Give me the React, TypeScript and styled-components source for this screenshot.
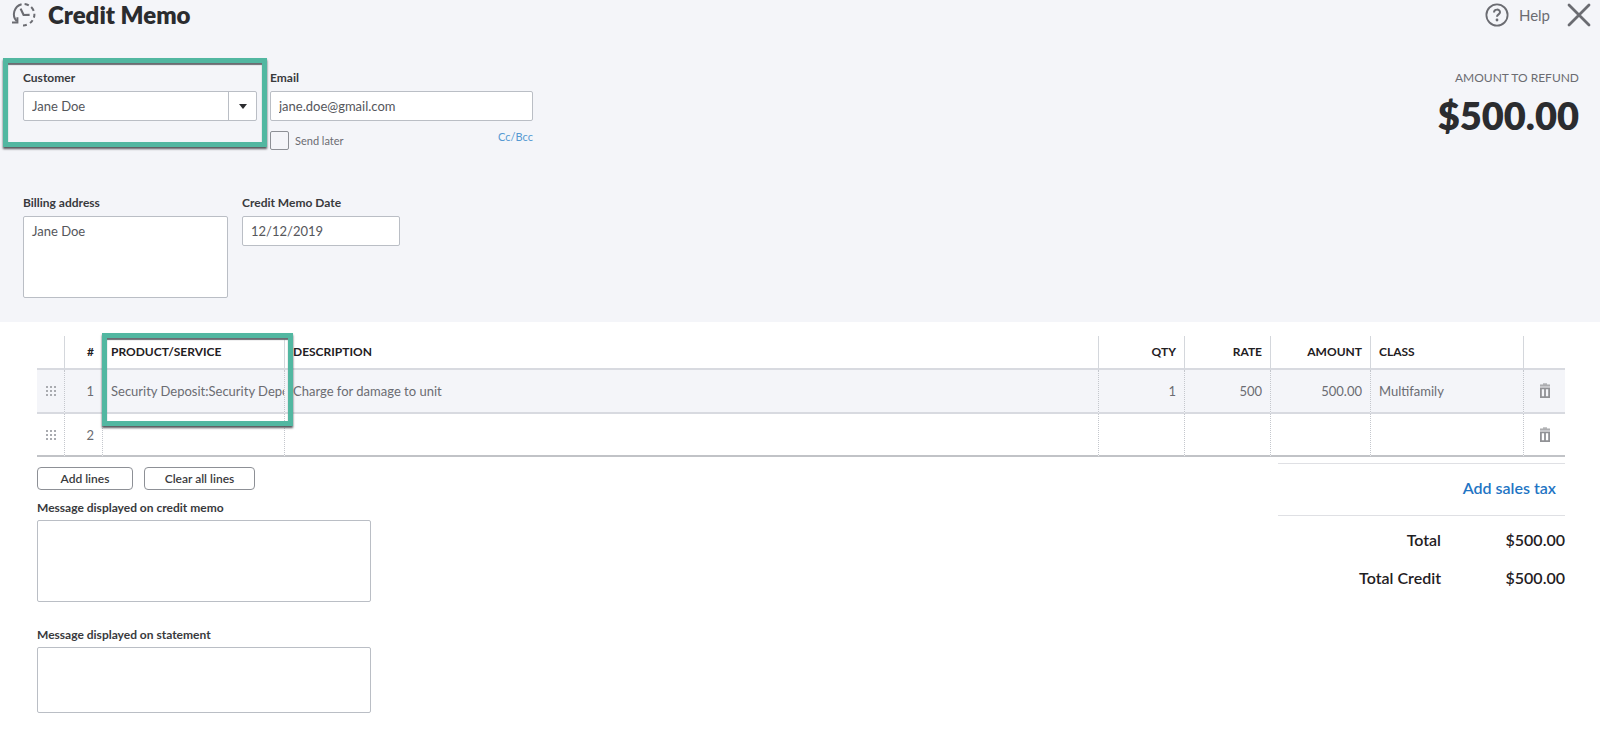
import React from "react";
import styled, { createGlobalStyle, css } from "styled-components";

const GlobalStyle = createGlobalStyle`
  *, *::before, *::after { box-sizing: border-box; }
  body {
    margin: 0;
    background: #ffffff;
    color: #393a3d;
    font-family: Lato, "Liberation Sans", sans-serif;
    font-size: 13px;
    line-height: 16px;
  }
  button, input, select, textarea { font: inherit; color: inherit; }
`;

const Header = styled.header`
  background: #f4f5f9;
  padding-bottom: 24px;
`;

const TopBar = styled.div`
  display: flex;
  align-items: center;
  justify-content: space-between;
  height: 29px;
  padding: 0 9px 0 11px;
`;

const TitleGroup = styled.div`
  display: flex;
  align-items: center;
  gap: 12px;
`;

const Title = styled.h1`
  margin: 0;
  font-size: 24px;
  line-height: 28px;
  font-weight: 800;
  color: #2b2c2f;
`;

const IconButton = styled.button`
  display: flex;
  align-items: center;
  gap: 10px;
  padding: 0;
  border: 0;
  background: none;
  color: #6b6c72;
  font-size: 15px;
  cursor: pointer;
`;

const TopActions = styled.div`
  display: flex;
  align-items: center;
  gap: 17px;
`;

const Summary = styled.div`
  display: flex;
  justify-content: space-between;
  align-items: flex-start;
  padding: 41px 21px 0 23px;
`;

const FieldRow = styled.div<{ $gap: number }>`
  display: flex;
  align-items: flex-start;
  gap: ${({ $gap }) => $gap}px;
`;

const AddressRow = styled(FieldRow)`
  padding: 45px 23px 0;
`;

const Field = styled.div<{ $width: number }>`
  position: relative;
  display: flex;
  flex-direction: column;
  gap: 5px;
  width: ${({ $width }) => $width}px;
`;

const Label = styled.label`
  font-size: 12px;
  font-weight: 700;
`;

const control = css`
  width: 100%;
  margin: 0;
  border: 1px solid #babec5;
  border-radius: 2px;
  background: #ffffff;
  color: #55565b;
  outline: none;
`;

const TextInput = styled.input`
  ${control}
  height: 30px;
  padding: 0 8px;
`;

const TextArea = styled.textarea<{ $height: number }>`
  ${control}
  display: block;
  height: ${({ $height }) => $height}px;
  padding: 6px 8px;
  resize: none;
`;

const SelectBox = styled.div`
  display: grid;
  grid-template-columns: 1fr 29px;
`;

const Select = styled.select`
  ${control}
  grid-area: 1 / 1 / 2 / 3;
  height: 30px;
  padding: 0 36px 0 8px;
  appearance: none;
`;

const SelectArrow = styled.span`
  grid-area: 1 / 2;
  display: flex;
  align-items: center;
  justify-content: center;
  border-left: 1px solid #babec5;
  pointer-events: none;
`;

const Highlight = styled.span<{ $inset: string }>`
  position: absolute;
  z-index: 1;
  inset: ${({ $inset }) => $inset};
  border: 5px solid #52b7a1;
  box-shadow: 0 2px 2px #55565b, inset 0 2px 1px #6b6c72;
  pointer-events: none;
`;

const EmailOptions = styled.div`
  display: flex;
  justify-content: space-between;
  align-items: flex-start;
  padding-top: 5px;
  font-size: 11px;
`;

const CheckLabel = styled.label`
  display: flex;
  align-items: center;
  gap: 6px;
  color: #6b6c72;
`;

const Checkbox = styled.input`
  appearance: none;
  width: 19px;
  height: 19px;
  margin: 0;
  border: 1px solid #8d9096;
  border-radius: 2px;
  background: #f4f5f9;
`;

const CcLink = styled.a`
  line-height: 12px;
  color: #5499d2;
  text-decoration: none;
`;

const Refund = styled.div`
  text-align: right;
`;

const RefundCaption = styled.div`
  font-size: 12px;
  color: #6b6c72;
`;

const RefundAmount = styled.div`
  padding-top: 6px;
  font-size: 38px;
  line-height: 46px;
  font-weight: 800;
  color: #2b2c2f;
`;

const Main = styled.main`
  padding: 14px 35px 26px 37px;
`;

const Lines = styled.table`
  width: 100%;
  table-layout: fixed;
  border-collapse: separate;
  border-spacing: 0;
`;

const Col = styled.col<{ $width?: number }>`
  width: ${({ $width }) => ($width ? `${$width}px` : "auto")};
`;

const HeadCell = styled.th<{ $align?: string }>`
  position: relative;
  height: 34px;
  padding: 0 8px;
  border-bottom: 2px solid #d8dae0;
  font-size: 12px;
  font-weight: 700;
  text-align: ${({ $align }) => $align ?? "left"};
  color: #1f2023;
  white-space: nowrap;

  & + & { border-left: 1px solid #d4d7dc; }
`;

const Cell = styled.td<{ $align?: string }>`
  height: 44px;
  padding: 0 0 0 8px;
  padding-right: ${({ $align }) => ($align === "right" ? 8 : 0)}px;
  border-bottom: 2px solid #d8dae0;
  text-align: ${({ $align }) => $align ?? "left"};
  color: #6b6c72;
  white-space: nowrap;
  overflow: hidden;

  & + & { border-left: 1px dotted #c4c7cd; }
`;

const IconCell = styled(Cell)`
  padding: 0;

  & > * { margin: 0 auto; }
`;

const LineRow = styled.tr<{ $active: boolean }>`
  background: ${({ $active }) => ($active ? "#f4f5f9" : "#ffffff")};

  &:last-child td {
    height: 43px;
    border-bottom-color: #c1c3c7;
  }
`;

const Footer = styled.div`
  display: flex;
  justify-content: space-between;
  align-items: flex-start;
`;

const Messages = styled.div`
  display: flex;
  flex-direction: column;
  padding-top: 10px;
`;

const ButtonRow = styled.div`
  display: flex;
  gap: 11px;
  padding-bottom: 10px;
`;

const LineButton = styled.button<{ $width: number }>`
  width: ${({ $width }) => $width}px;
  height: 23px;
  padding: 0;
  border: 1px solid #8d9096;
  border-radius: 4px;
  background: #ffffff;
  font-size: 12px;
  font-weight: 600;
  cursor: pointer;
`;

const MessageField = styled(Field)`
  gap: 4px;

  & + & { padding-top: 25px; }
`;

const Totals = styled.section`
  width: 287px;
  margin-top: 6px;
  font-size: 16px;
  line-height: 38px;
  border-top: 1px solid #dfe0e4;
`;

const TaxRow = styled.div`
  display: flex;
  justify-content: flex-end;
  height: 51px;
  padding: 5px 9px 0 0;
`;

const TaxLink = styled.a`
  font-weight: 600;
  color: #1f75c4;
  text-decoration: none;
`;

const TotalList = styled.dl`
  display: grid;
  grid-template-columns: 1fr 124px;
  margin: 0;
  padding-top: 5px;
  border-top: 1px solid #dfe0e4;
  font-weight: 600;
  text-align: right;
  color: #1f2023;
`;

const TotalValue = styled.dd`
  margin: 0;
`;

const HistoryIcon = () => (
  <svg width="25" height="25" viewBox="0 0 25 25" fill="none" stroke="#6b6c72" strokeWidth="2">
    <path d="M10.6 2.2A10.4 10.4 0 0 0 5.6 19.2" />
    <path d="M1 20.6h5.4v-5.4" />
    <path d="M13.6 2a10.5 10.5 0 0 1 4.2 1.4M20.2 5a10.5 10.5 0 0 1 2.5 3.9M23.4 11.8a10.5 10.5 0 0 1-.5 3.8M21.6 18.2a10.5 10.5 0 0 1-2.6 2.8M15.8 22.8a10.5 10.5 0 0 1-3.8.6" />
    <path d="M9.6 6.6l3 6.4 6-.2" strokeWidth="2.2" />
  </svg>
);

const HelpIcon = () => (
  <svg width="24" height="24" viewBox="0 0 24 24" fill="none" stroke="#6b6c72">
    <circle cx="12" cy="12" r="10.6" strokeWidth="1.8" />
    <path d="M9 9.5c0-3.8 6-3.8 6-.2 0 2.1-3 2.1-3 4.5" strokeWidth="2" />
    <circle cx="12" cy="17" r="1.4" fill="#6b6c72" stroke="none" />
  </svg>
);

const CloseIcon = () => (
  <svg width="24" height="24" viewBox="0 0 24 24" fill="none" stroke="#6b6c72" strokeWidth="2.8" strokeLinecap="round">
    <path d="M2 2l20 20M22 2L2 22" />
  </svg>
);

const ArrowIcon = () => (
  <svg width="8" height="5" viewBox="0 0 8 5">
    <path d="M0 0h8L4 5z" fill="#2b2c2f" />
  </svg>
);

const GripIcon = () => (
  <svg width="10" height="10" viewBox="0 0 10 10" fill="#a9abb0" display="block">
    {[0, 4, 8].map((y) => [0, 4, 8].map((x) => <rect key={`${x}-${y}`} x={x} y={y} width="2" height="2" />))}
  </svg>
);

const TrashIcon = () => (
  <svg width="12" height="16" viewBox="0 0 12 16" fill="none" stroke="#919296">
    <path d="M4 1h4" strokeWidth="1" />
    <path d="M1 2.2h10" strokeWidth="1.2" />
    <path d="M1 3.4h10" stroke="#c9cacd" strokeWidth="1.2" />
    <path d="M1.9 5.4h8.2v8.8H1.9zM6 5v9" strokeWidth="1.8" />
  </svg>
);

interface Line {
  product: string;
  description: string;
  qty: string;
  rate: string;
  amount: string;
  category: string;
}

const lines: Line[] = [
  {
    product: "Security Deposit:Security Deposit",
    description: "Charge for damage to unit",
    qty: "1",
    rate: "500",
    amount: "500.00",
    category: "Multifamily",
  },
  { product: "", description: "", qty: "", rate: "", amount: "", category: "" },
];

export default function App() {
  return (
    <>
      <GlobalStyle />
      <Header>
        <TopBar>
          <TitleGroup>
            <IconButton type="button" aria-label="Recent transactions"><HistoryIcon /></IconButton>
            <Title>Credit Memo</Title>
          </TitleGroup>
          <TopActions>
            <IconButton type="button"><HelpIcon />Help</IconButton>
            <IconButton type="button" aria-label="Close"><CloseIcon /></IconButton>
          </TopActions>
        </TopBar>
        <Summary>
          <FieldRow $gap={13}>
            <Field $width={234}>
              <Label htmlFor="customer">Customer</Label>
              <SelectBox>
                <Select id="customer" defaultValue="Jane Doe">
                  <option>Jane Doe</option>
                </Select>
                <SelectArrow><ArrowIcon /></SelectArrow>
              </SelectBox>
              <Highlight $inset="-12px -10px -26px -20px" />
            </Field>
            <Field $width={263}>
              <Label htmlFor="email">Email</Label>
              <TextInput id="email" type="email" defaultValue="jane.doe@gmail.com" />
              <EmailOptions>
                <CheckLabel><Checkbox type="checkbox" />Send later</CheckLabel>
                <CcLink href="#cc">Cc/Bcc</CcLink>
              </EmailOptions>
            </Field>
          </FieldRow>
          <Refund>
            <RefundCaption>AMOUNT TO REFUND</RefundCaption>
            <RefundAmount>$500.00</RefundAmount>
          </Refund>
        </Summary>
        <AddressRow $gap={14}>
          <Field $width={205}>
            <Label htmlFor="address">Billing address</Label>
            <TextArea id="address" $height={82} defaultValue="Jane Doe" />
          </Field>
          <Field $width={158}>
            <Label htmlFor="date">Credit Memo Date</Label>
            <TextInput id="date" type="text" defaultValue="12/12/2019" />
          </Field>
        </AddressRow>
      </Header>
      <Main>
        <Lines>
          <colgroup>
            <Col $width={27} />
            <Col $width={38} />
            <Col $width={182} />
            <Col />
            <Col $width={86} />
            <Col $width={86} />
            <Col $width={100} />
            <Col $width={153} />
            <Col $width={42} />
          </colgroup>
          <thead>
            <tr>
              <HeadCell aria-label="Reorder" />
              <HeadCell $align="right">#</HeadCell>
              <HeadCell>
                PRODUCT/SERVICE
                <Highlight $inset="-3px -9px -58px -1px" />
              </HeadCell>
              <HeadCell>DESCRIPTION</HeadCell>
              <HeadCell $align="right">QTY</HeadCell>
              <HeadCell $align="right">RATE</HeadCell>
              <HeadCell $align="right">AMOUNT</HeadCell>
              <HeadCell>CLASS</HeadCell>
              <HeadCell aria-label="Delete" />
            </tr>
          </thead>
          <tbody>
            {lines.map((line, index) => (
              <LineRow key={index} $active={index === 0}>
                <IconCell><GripIcon /></IconCell>
                <Cell $align="right">{index + 1}</Cell>
                <Cell>{line.product}</Cell>
                <Cell>{line.description}</Cell>
                <Cell $align="right">{line.qty}</Cell>
                <Cell $align="right">{line.rate}</Cell>
                <Cell $align="right">{line.amount}</Cell>
                <Cell>{line.category}</Cell>
                <IconCell>
                  <IconButton type="button" aria-label={`Delete line ${index + 1}`}><TrashIcon /></IconButton>
                </IconCell>
              </LineRow>
            ))}
          </tbody>
        </Lines>
        <Footer>
          <Messages>
            <ButtonRow>
              <LineButton type="button" $width={96}>Add lines</LineButton>
              <LineButton type="button" $width={111}>Clear all lines</LineButton>
            </ButtonRow>
            <MessageField $width={334}>
              <Label htmlFor="memo-message">Message displayed on credit memo</Label>
              <TextArea id="memo-message" $height={82} />
            </MessageField>
            <MessageField $width={334}>
              <Label htmlFor="statement-message">Message displayed on statement</Label>
              <TextArea id="statement-message" $height={66} />
            </MessageField>
          </Messages>
          <Totals>
            <TaxRow><TaxLink href="#tax">Add sales tax</TaxLink></TaxRow>
            <TotalList>
              <dt>Total</dt>
              <TotalValue>$500.00</TotalValue>
              <dt>Total Credit</dt>
              <TotalValue>$500.00</TotalValue>
            </TotalList>
          </Totals>
        </Footer>
      </Main>
    </>
  );
}
